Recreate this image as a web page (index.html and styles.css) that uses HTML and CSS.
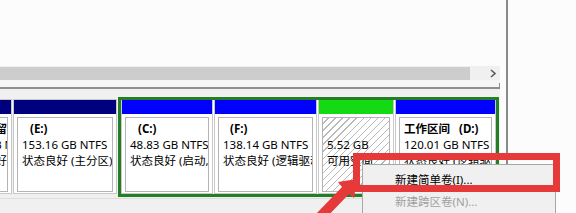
FILE: index.html
```html
<!DOCTYPE html>
<html lang="zh-CN">
<head>
<meta charset="utf-8">
<title>磁盘管理</title>
<link rel="stylesheet" href="styles.css">
</head>
<body>
<div class="window">
  <div class="pane">
    <div class="list"></div>
    <div class="hscroll">
      <div class="thumb"></div>
      <div class="scroll-btn">
        <svg width="8" height="9" viewBox="0 0 8 9"><polyline points="2,1 6,4.5 2,8" fill="none" stroke="#5a5a5a" stroke-width="1.6"/></svg>
      </div>
    </div>
    <div class="splitter"><div class="tick"></div></div>
    <div class="diskmap">
      <div class="row">
        <div class="part outer sys">
          <div class="bar navy"></div>
          <div class="body">
            <div class="label">系统保留</div>
            <div>500 MB NTFS</div>
            <div>状态良好 (系统, 活动, 主分区)</div>
          </div>
        </div>
        <div class="part outer e">
          <div class="bar navy"></div>
          <div class="body">
            <div class="label"><span class="drive">(E:)</span></div>
            <div>153.16 GB NTFS</div>
            <div>状态良好 (主分区)</div>
          </div>
        </div>
        <div class="ext">
          <div class="part inner c">
            <div class="bar blue"></div>
            <div class="body">
              <div class="label"><span class="drive">(C:)</span></div>
              <div>48.83 GB NTFS</div>
              <div>状态良好 (启动, 页面文件, 故障转储, 主分区)</div>
            </div>
          </div>
          <div class="part inner f">
            <div class="bar blue"></div>
            <div class="body">
              <div class="label"><span class="drive-f">(F:)</span></div>
              <div>138.14 GB NTFS</div>
              <div>状态良好 (逻辑驱动器)</div>
            </div>
          </div>
          <div class="part inner free">
            <div class="bar lime"></div>
            <div class="body hatch">
              <div class="label">&nbsp;</div>
              <div>5.52 GB</div>
              <div>可用空间</div>
            </div>
          </div>
          <div class="part inner d">
            <div class="bar blue"></div>
            <div class="body">
              <div class="label">工作区间<span class="drive-d">(D:)</span></div>
              <div>120.01 GB NTFS</div>
              <div>状态良好 (逻辑驱动器)</div>
            </div>
          </div>
        </div>
      </div>
    </div>
  </div>
  <div class="gutter"></div>
  <div class="vline"></div>
  <div class="side"></div>
</div>

<div class="menu">
  <div class="item">新建简单卷(I)...</div>
  <div class="item disabled">新建跨区卷(N)...</div>
</div>
<div class="redbox"></div>
<svg class="red-arrow" width="576" height="213" viewBox="0 0 576 213">
  <polygon points="357,179 354,198 349,194 323,221 316,214 342,187 338,182" fill="#e63a3a"/>
</svg>
</body>
</html>
```
FILE: styles.css
```css
* { box-sizing: border-box; }
html, body {
  margin: 0;
  padding: 0;
  width: 576px;
  height: 213px;
  overflow: hidden;
  background: #fcfcfc;
}
body {
  font-family: "Noto Sans", "Noto Sans CJK SC", sans-serif;
  font-size: 11.5px;
  color: #000;
  position: relative;
}
.window {
  display: flex;
  width: 576px;
  height: 213px;
}
.pane {
  width: 500px;
  display: flex;
  flex-direction: column;
  flex: none;
}
.list {
  height: 66px;
  background: #fcfcfc;
}
.hscroll {
  height: 14px;
  background: #f0f0f0;
  display: flex;
  align-items: center;
}
.thumb {
  width: 470px;
  height: 13px;
  background: #cdcdcd;
}
.scroll-btn {
  flex: 1;
  display: flex;
  justify-content: flex-end;
  padding-right: 3px;
}
.scroll-btn svg { display: block; }
.splitter {
  height: 9px;
  background: #f6f6f6;
  border-bottom: 2px solid #8e8e8e;
  display: flex;
  justify-content: flex-end;
  align-items: flex-end;
}
.tick {
  width: 1px;
  height: 4px;
  background: #8e8e8e;
}
.diskmap {
  flex: 1;
  background: #f0f0f0;
  padding-top: 8px;
  overflow: hidden;
}
.row {
  display: flex;
  gap: 1px;
  align-items: flex-start;
  border-bottom: 1px solid #dedede;
  padding-bottom: 1px;
}
.part {
  background: #fff;
  border: 1px solid #c8c8c8;
  display: flex;
  flex-direction: column;
  flex: none;
}
.part.outer {
  height: 95px;
  margin-top: 2px;
}
.part.inner {
  height: 94px;
  border-top: 0;
}
.sys { width: 60px; margin-left: -48px; }
.e { width: 104px; }
.c { width: 92px; }
.f { width: 103px; }
.free { width: 76px; }
.d { width: 101px; }
.bar { height: 14px; flex: none; }
.navy { background: #00007f; }
.blue { background: #0000ff; }
.lime { background: #14da14; }
.body {
  margin: 3px 3px 1px;
  height: 75px;
  border: 1px solid #b4b4b4;
  padding: 3px 0 0 4px;
  line-height: 16px;
  white-space: nowrap;
  overflow: hidden;
  background: #fff;
}
.hatch {
  background: repeating-linear-gradient(-45deg, #fff 0, #fff 4px, #b9b9b9 4px, #b9b9b9 5px);
}
.label { font-weight: bold; }
.drive { margin-left: 8px; }
.drive-f { margin-left: 7px; }
.drive-d { margin-left: 9px; }
.ext {
  width: 381px;
  height: 100px;
  border: 3px solid #247f24;
  background: #fff;
  display: flex;
  gap: 1px;
  flex: none;
}
.gutter {
  width: 6px;
  background: #fcfcfc;
  flex: none;
}
.vline {
  width: 2px;
  background: #8a8a8a;
  flex: none;
}
.side {
  flex: 1;
  background: #fcfcfc;
}
.menu {
  position: absolute;
  left: 362px;
  top: 164px;
  width: 194px;
  height: 49px;
  background: #f0f0f0;
  border: 1px solid #a7a7a7;
  border-bottom: 0;
  padding-top: 4px;
  overflow: hidden;
}
.item {
  height: 22px;
  line-height: 22px;
  padding-left: 32px;
  color: #000;
  white-space: nowrap;
}
.item.disabled { color: #a0a0a0; }
.redbox {
  position: absolute;
  left: 353px;
  top: 153px;
  width: 207px;
  height: 39px;
  border: 7px solid #e63a3a;
}
.red-arrow {
  position: absolute;
  left: 0;
  top: 0;
  pointer-events: none;
}
```
